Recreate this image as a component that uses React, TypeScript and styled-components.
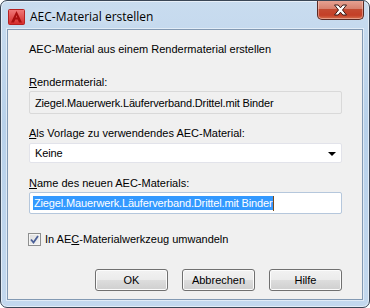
import React from "react";
import styled, { createGlobalStyle } from "styled-components";

const Global = createGlobalStyle`
  html, body { margin: 0; padding: 0; background: #ffffff; }
  body { font-family: "Liberation Sans", Arial, sans-serif; }
`;

const Window = styled.div`
  box-sizing: border-box;
  width: 370px;
  height: 308px;
  border: 1px solid #3a4656;
  border-radius: 7px;
  background: linear-gradient(180deg, #c9dcef 0%, #b8d1ea 40%, #c3d8ee 100%);
  box-shadow: inset 0 0 0 1px rgba(255, 255, 255, 0.55);
  display: flex;
  flex-direction: column;
  overflow: hidden;
`;

const TitleBar = styled.div`
  height: 28px;
  display: flex;
  align-items: flex-start;
  padding-left: 7px;
  flex: none;
`;

const AppIcon = styled.svg`
  margin-top: 8px;
  flex: none;
`;

const Title = styled.div`
  margin-top: 9px;
  margin-left: 5px;
  font-family: "Open Sans", "Liberation Sans", sans-serif;
  font-size: 12px;
  line-height: 14px;
  color: #000;
  flex: 1;
  text-shadow: 0 0 8px rgba(255, 255, 255, 0.9);
`;

const CloseButton = styled.div`
  box-sizing: border-box;
  width: 47px;
  height: 20px;
  margin-top: -1px;
  margin-right: 5px;
  border: 1px solid #5a2a24;
  border-top: none;
  border-radius: 0 0 5px 5px;
  background: linear-gradient(180deg, #e8a596 0%, #d8826f 45%, #c44a31 50%, #c43f27 80%, #d5704f 100%);
  box-shadow: inset 0 0 0 1px rgba(255, 220, 210, 0.45);
  display: flex;
  align-items: center;
  justify-content: center;
`;

const Client = styled.div`
  box-sizing: border-box;
  margin: 0 6px 7px 6px;
  flex: 1;
  border: 1px solid #8299b3;
  box-shadow: 0 0 0 1px rgba(255, 255, 255, 0.5);
  background: #f0f0f0;
  padding: 12px 20px 0 21px;
  display: flex;
  flex-direction: column;
  font-family: "Liberation Sans", Arial, sans-serif;
  font-size: 11px;
  color: #000;
`;

const Text = styled.div<{ $mt?: number }>`
  line-height: 14px;
  margin-top: ${(p) => p.$mt ?? 0}px;
  white-space: nowrap;
`;

const Field = styled.div<{ $mt: number; $h: number; $bg: string; $border: string }>`
  box-sizing: border-box;
  margin-top: ${(p) => p.$mt}px;
  height: ${(p) => p.$h}px;
  background: ${(p) => p.$bg};
  border: 1px solid ${(p) => p.$border};
  border-radius: 2px;
  display: flex;
  align-items: center;
  padding-left: 5px;
  white-space: nowrap;
  letter-spacing: -0.15px;
`;

const ComboText = styled.span`
  flex: 1;
`;

const Arrow = styled.span`
  width: 0;
  height: 0;
  border-left: 4px solid transparent;
  border-right: 4px solid transparent;
  border-top: 4px solid #000;
  margin-right: 5px;
  margin-top: 1px;
`;

const Selected = styled.span`
  background: #3399ff;
  color: #fff;
  line-height: 14px;
  padding: 0 1px;
  margin-left: -2px;
`;

const Caret = styled.span`
  width: 1px;
  height: 15px;
  background: #7a4a1c;
`;

const CheckRow = styled.div`
  margin-top: 18px;
  display: flex;
  align-items: center;
  margin-left: -1px;
`;

const CheckBox = styled.div`
  box-sizing: border-box;
  width: 13px;
  height: 13px;
  border: 1px solid #8e8f8f;
  background: linear-gradient(135deg, #dcdcdc 0%, #f4f4f4 100%);
  box-shadow: inset 0 0 0 1px #f5f5f5;
  display: flex;
  align-items: center;
  justify-content: center;
  margin-right: 4px;
`;

const ButtonRow = styled.div`
  margin-top: 23px;
  display: flex;
  justify-content: flex-end;
  gap: 14px;
`;

const Button = styled.div`
  box-sizing: border-box;
  width: 73px;
  height: 22px;
  border: 1px solid #707070;
  border-radius: 3px;
  background: linear-gradient(180deg, #f2f2f2 0%, #ebebeb 50%, #dddddd 51%, #cfcfcf 100%);
  box-shadow: inset 0 0 0 1px #fcfcfc;
  display: flex;
  align-items: center;
  justify-content: center;
  font-size: 11px;
`;

const U = styled.span`
  text-decoration: underline;
`;

export default function App() {
  return (
    <>
      <Global />
      <Window>
        <TitleBar>
          <AppIcon width="17" height="16" viewBox="0 0 17 16">
            <defs>
              <linearGradient id="ig" x1="0" y1="0" x2="0" y2="1">
                <stop offset="0" stopColor="#f07a7a" />
                <stop offset="1" stopColor="#d42a2a" />
              </linearGradient>
            </defs>
            <rect x="0.5" y="0.5" width="16" height="15" rx="1" fill="url(#ig)" stroke="#b52020" />
            <path d="M8.5 2 L14 13.5 L11 13.5 L9.7 10.5 L7.3 10.5 L6 13.5 L3 13.5 Z M8.5 6.2 L7.7 8.6 L9.3 8.6 Z" fill="#a80f0f" fillRule="evenodd" />
          </AppIcon>
          <Title>AEC-Material erstellen</Title>
          <CloseButton>
            <svg width="15" height="12" viewBox="0 0 15 12">
              <path
                d="M1.5 1 L5.2 1 L7.5 3.8 L9.8 1 L13.5 1 L9.5 6 L13.5 11 L9.8 11 L7.5 8.2 L5.2 11 L1.5 11 L5.5 6 Z"
                fill="#ffffff"
                stroke="#3b1a16"
                strokeWidth="1"
                strokeLinejoin="round"
              />
            </svg>
          </CloseButton>
        </TitleBar>
        <Client>
          <Text>AEC-Material aus einem Rendermaterial erstellen</Text>
          <Text $mt={19}>
            <U>R</U>endermaterial:
          </Text>
          <Field $mt={2} $h={23} $bg="#f0f0f0" $border="#d9d9d9">
            Ziegel.Mauerwerk.Läuferverband.Drittel.mit Binder
          </Field>
          <Text $mt={12}>
            <U>A</U>ls Vorlage zu verwendendes AEC-Material:
          </Text>
          <Field $mt={3} $h={20} $bg="#ffffff" $border="#e2e3ea">
            <ComboText>Keine</ComboText>
            <Arrow />
          </Field>
          <Text $mt={13}>
            <U>N</U>ame des neuen AEC-Materials:
          </Text>
          <Field $mt={2} $h={22} $bg="#ffffff" $border="#b5c7dc">
            <Selected>Ziegel.Mauerwerk.Läuferverband.Drittel.mit Binder</Selected>
            <Caret />
          </Field>
          <CheckRow>
            <CheckBox>
              <svg width="9" height="9" viewBox="0 0 9 9">
                <path d="M1 4.5 L3.5 7.5 L8 1" fill="none" stroke="#4a5f97" strokeWidth="1.8" />
              </svg>
            </CheckBox>
            <Text>
              In AE<U>C</U>-Materialwerkzeug umwandeln
            </Text>
          </CheckRow>
          <ButtonRow>
            <Button>OK</Button>
            <Button>Abbrechen</Button>
            <Button>Hilfe</Button>
          </ButtonRow>
        </Client>
      </Window>
    </>
  );
}
